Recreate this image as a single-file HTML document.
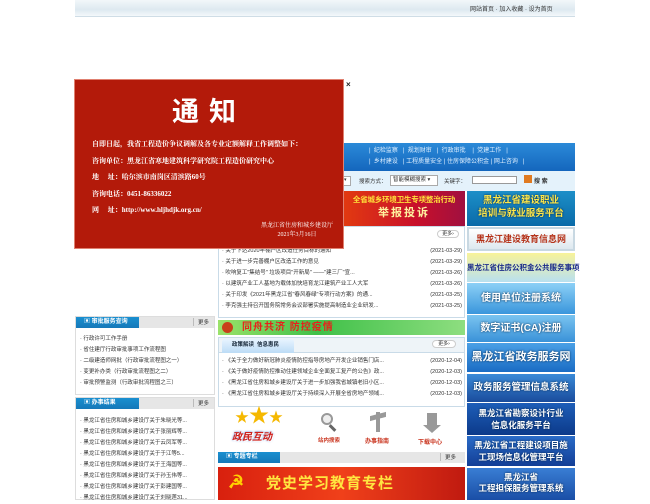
<!DOCTYPE html>
<html><head><meta charset="utf-8">
<style>
*{margin:0;padding:0;box-sizing:border-box}
body{width:650px;height:500px;overflow:hidden;background:#fff;font-family:"Liberation Sans","Noto Sans CJK SC",sans-serif;font-size:6px;color:#333;position:relative}
.a{position:absolute}
.hd{background:linear-gradient(#1a8fd0,#1578b8);color:#fff;font-weight:bold;padding-left:8px;line-height:12px;font-size:6px}
.li{position:absolute;left:0;right:0;font-size:5.5px;line-height:11px;white-space:nowrap;overflow:hidden}
.rb{position:absolute;left:467px;width:108px;color:#fff;font-weight:bold;text-align:center;text-shadow:0 0 2px #024;white-space:nowrap}
</style></head><body>
<div class="a" style="left:75px;top:0;width:500px;height:17px;background:linear-gradient(#f2f7fa,#dde9f0 60%,#f4f8fb);border-bottom:1px solid #cfdde6"></div>
<div class="a" style="left:470px;top:4px;font-size:6px;color:#333">网站首页 · 加入收藏 · 设为首页</div>

<div class="a" style="left:343px;top:143px;width:232px;height:28px;background:linear-gradient(#2b8ad8,#1466bd)"></div>
<div class="a" style="left:343px;top:146px;width:232px;color:#dfefff;font-size:6px;line-height:11px;white-space:nowrap">
<div style="position:absolute;left:26px;top:0">| &nbsp;纪检监察 &nbsp; | &nbsp;规划财审 &nbsp;&nbsp;| &nbsp;行政审批 &nbsp;&nbsp; | &nbsp;党建工作 &nbsp; |</div>
<div style="position:absolute;left:26px;top:11px">| &nbsp;乡村建设 &nbsp; | 工程质量安全 | 住房保障公积金 | 网上咨询 &nbsp; |</div></div>
<div class="a" style="left:343px;top:171px;width:232px;height:20px;background:#e4f2fb"></div>
<div class="a" style="left:343px;top:176px;width:8px;height:10px;border:1px solid #aaa;background:#fff;font-size:5px">▾</div>
<div class="a" style="left:359px;top:177px;font-size:5.5px">搜索方式：</div>
<div class="a" style="left:390px;top:175px;width:48px;height:11px;border:1px solid #aaa;background:#fff;font-size:5.5px;padding-left:2px;line-height:9px">智能模糊搜索 ▾</div>
<div class="a" style="left:444px;top:177px;font-size:5.5px">关键字：</div>
<div class="a" style="left:472px;top:176px;width:45px;height:8px;border:1px solid #999;background:#fff"></div>
<div class="a" style="left:524px;top:175px;width:8px;height:8px;background:#e07a20"></div>
<div class="a" style="left:534px;top:176px;font-size:6px;font-weight:bold">搜 索</div>

<div class="a" style="left:343px;top:191px;width:122px;height:35px;background:linear-gradient(90deg,#e23a10,#c8102a 60%,#a01040);color:#ffe23a;font-weight:bold;text-align:center;white-space:nowrap;overflow:hidden">
<div style="font-size:7.5px;margin-top:3px;letter-spacing:-0.2px">全省城乡环境卫生专项整治行动</div><div style="font-size:11px;line-height:16px;color:#fff4a0;letter-spacing:2px">举报投诉</div></div>
<div class="rb" style="top:191px;height:35px;background:linear-gradient(#1d8fc8,#0a6aa8);color:#ffe84a;font-size:9.5px;line-height:13px;padding-top:3px">黑龙江省建设职业<br>培训与就业服务平台</div>
<div class="rb" style="top:227px;height:24px;background:linear-gradient(#fff,#dde8ef);border:2px solid #c8d8e2;color:#b5331a;font-size:9px;line-height:20px;text-shadow:none">黑龙江建设教育信息网</div>
<div class="rb" style="top:253px;height:29px;background:linear-gradient(#f8f39a,#b8e0f0);color:#1a2a8a;font-size:7.5px;line-height:29px;text-shadow:none">黑龙江省住房公积金公共服务事项</div>
<div class="rb" style="top:283px;height:31px;background:linear-gradient(#8cd0f6,#3a96dc);font-size:10px;line-height:31px">使用单位注册系统</div>
<div class="rb" style="top:315px;height:27px;background:linear-gradient(#7ac4f0,#3a92d8);font-size:10px;line-height:27px">数字证书(CA)注册</div>
<div class="rb" style="top:343px;height:29px;background:linear-gradient(#4aa0e6,#1a6cc4);font-size:11px;line-height:29px">黑龙江省政务服务网</div>
<div class="rb" style="top:374px;height:28px;background:linear-gradient(#3a8ad8,#1a4c9c);font-size:9.5px;line-height:28px">政务服务管理信息系统</div>
<div class="rb" style="top:403px;height:32px;background:linear-gradient(#1e5eb8,#0c3a8a);font-size:8.5px;line-height:12px;padding-top:4px">黑龙江省勘察设计行业<br>信息化服务平台</div>
<div class="rb" style="top:436px;height:30px;background:linear-gradient(#2a6cc8,#133e96);font-size:8.5px;line-height:12px;padding-top:3px">黑龙江省工程建设项目施<br>工现场信息化管理平台</div>
<div class="rb" style="top:468px;height:32px;background:linear-gradient(#3a7ed4,#1a4ea6);font-size:8.5px;line-height:11px;padding-top:4px">黑龙江省<br>工程担保服务管理系统</div>

<div class="a" style="left:218px;top:226px;width:247px;height:92px;border:1px solid #c9dbe8;background:#fff"></div>
<div class="a" style="left:437px;top:230px;width:22px;height:8px;border:1px solid #ccc;border-radius:5px;font-size:5px;text-align:center;line-height:7px">更多›</div>
<div class="a" style="left:222px;top:246px;width:240px">
<div class="li" style="top:0">· 关于下达2020年棚户区改造任务目标的通知<span style="position:absolute;right:0">(2021-03-29)</span></div>
<div class="li" style="top:11px">· 关于进一步完善棚户区改造工作的意见<span style="position:absolute;right:0">(2021-03-29)</span></div>
<div class="li" style="top:22px">· 吹响复工"集结号" 垃圾项目"开新局" ——"建三厂"宣...<span style="position:absolute;right:0">(2021-03-26)</span></div>
<div class="li" style="top:33px">· 以建筑产业工人基地为载体加快培育龙江建筑产业工人大军<span style="position:absolute;right:0">(2021-03-26)</span></div>
<div class="li" style="top:44px">· 关于印发《2021年黑龙江省"春风春绿"专项行动方案》的通...<span style="position:absolute;right:0">(2021-03-25)</span></div>
<div class="li" style="top:55px">· 李克强主持召开国务院常务会议部署实施提高制造业企业研发...<span style="position:absolute;right:0">(2021-03-25)</span></div>
</div>
<div class="a" style="left:218px;top:320px;width:247px;height:15px;background:linear-gradient(90deg,#9be26a,#3fc048 40%,#8ede80);color:#e8201a;font-size:10px;font-weight:bold;padding-left:24px;line-height:15px;letter-spacing:1px">同舟共济 防控疫情</div>
<div class="a" style="left:222px;top:322px;width:11px;height:11px;border-radius:50%;background:#c8401a"></div>
<div class="a" style="left:218px;top:337px;width:247px;height:70px;border:1px solid #c9dbe8"></div>
<div class="a" style="left:219px;top:338px;width:245px;height:15px;background:#eef4f8;border-bottom:1px solid #c9dbe8"></div>
<div class="a" style="left:222px;top:339px;width:72px;height:14px;background:linear-gradient(#e8f4ff,#bcdcf6);border-radius:3px 3px 0 0;font-size:5.5px;font-weight:bold;line-height:13px;padding-left:10px;color:#123">政策解读 &nbsp;信息惠民</div>
<div class="a" style="left:432px;top:340px;width:24px;height:8px;border:1px solid #ccc;border-radius:5px;font-size:5px;text-align:center;line-height:7px;background:#fff">更多›</div>
<div class="a" style="left:222px;top:356px;width:240px">
<div class="li" style="top:0">· 《关于全力做好新冠肺炎疫情防控指导房地产开发企业销售门店...<span style="position:absolute;right:0">(2020-12-04)</span></div>
<div class="li" style="top:11px">· 《关于做好疫情防控推动住建领域企业全面复工复产的公告》政...<span style="position:absolute;right:0">(2020-12-03)</span></div>
<div class="li" style="top:22px">· 《黑龙江省住房和城乡建设厅关于进一步加强我省城镇老旧小区...<span style="position:absolute;right:0">(2020-12-03)</span></div>
<div class="li" style="top:33px">· 《黑龙江省住房和城乡建设厅关于持续深入开展全省房地产领域...<span style="position:absolute;right:0">(2020-12-03)</span></div>
</div>
<div class="a" style="left:235px;top:409px;color:#f5b800;font-size:14px;line-height:14px">★<span style="font-size:20px">★</span>★</div>
<div class="a" style="left:232px;top:428px;font-size:10px;font-weight:bold;color:#d0201a;font-style:italic;text-shadow:1px 1px 0 #fff,0 0 2px #3366cc">政民互动</div>
<div class="a" style="left:321px;top:413px;width:12px;height:12px;border:2px solid #999;border-radius:50%;background:#eee"></div>
<div class="a" style="left:331px;top:424px;width:3px;height:8px;background:#666;transform:rotate(-45deg)"></div>
<div class="a" style="left:318px;top:436px;font-size:5.5px;color:#c8301a;font-weight:bold">站内搜索</div>
<div class="a" style="left:376px;top:412px;width:4px;height:20px;background:#999"></div>
<div class="a" style="left:370px;top:414px;width:16px;height:5px;background:#999;transform:skewY(-15deg)"></div>
<div class="a" style="left:365px;top:436px;font-size:6px;color:#c8301a;font-weight:bold">办事指南</div>
<div class="a" style="left:427px;top:413px;width:10px;height:12px;background:#999"></div>
<div class="a" style="left:423px;top:425px;width:0;height:0;border-left:9px solid transparent;border-right:9px solid transparent;border-top:8px solid #999"></div>
<div class="a" style="left:418px;top:437px;font-size:6px;color:#c8301a;font-weight:bold">下载中心</div>
<div class="a" style="left:218px;top:452px;width:247px;height:11px;background:#e6e6e6"></div>
<div class="a hd" style="left:218px;top:452px;width:62px;height:11px;line-height:11px">▣ 专题专栏</div>
<div class="a" style="left:440px;top:453px;font-size:5.5px;border-left:1px solid #bbb;padding-left:4px">更多</div>
<div class="a" style="left:218px;top:467px;width:247px;height:33px;background:linear-gradient(90deg,#d8200e,#f0401a 50%,#c01a10);color:#ffe640;font-size:15px;font-weight:bold;padding-left:48px;line-height:33px;letter-spacing:1px">党史学习教育专栏</div>
<div class="a" style="left:228px;top:472px;color:#ffd000;font-size:18px;font-weight:bold">☭</div>

<div class="a" style="left:75px;top:316px;width:140px;height:79px;border:1px solid #ddd"></div>
<div class="a" style="left:76px;top:317px;width:138px;height:11px;background:#e6e6e6"></div>
<div class="a hd" style="left:76px;top:317px;width:63px;height:11px;line-height:11px">▣ 审批服务查询</div>
<div class="a" style="left:193px;top:318px;font-size:5.5px;border-left:1px solid #bbb;padding-left:4px">更多</div>
<div class="a" style="left:80px;top:334px;width:134px">
<div class="li" style="top:0">· 行政许可工作手册</div>
<div class="li" style="top:11px">· 省住建厅行政审批事项工作流程图</div>
<div class="li" style="top:22px">· 二级建造师网批（行政审批流程图之一）</div>
<div class="li" style="top:33px">· 变更补办类（行政审批流程图之二）</div>
<div class="li" style="top:44px">· 审批预警监测（行政审批流程图之三）</div>
</div>
<div class="a" style="left:75px;top:397px;width:140px;height:103px;border:1px solid #ddd"></div>
<div class="a" style="left:76px;top:398px;width:138px;height:11px;background:#e6e6e6"></div>
<div class="a hd" style="left:76px;top:398px;width:63px;height:11px;line-height:11px">▣ 办事结果</div>
<div class="a" style="left:193px;top:399px;font-size:5.5px;border-left:1px solid #bbb;padding-left:4px">更多</div>
<div class="a" style="left:80px;top:416px;width:134px">
<div class="li" style="top:0">· 黑龙江省住房和城乡建设厅关于朱晓光等...</div>
<div class="li" style="top:11px">· 黑龙江省住房和城乡建设厅关于张丽辉等...</div>
<div class="li" style="top:22px">· 黑龙江省住房和城乡建设厅关于云凤军等...</div>
<div class="li" style="top:33px">· 黑龙江省住房和城乡建设厅关于于江等5...</div>
<div class="li" style="top:44px">· 黑龙江省住房和城乡建设厅关于王海国等...</div>
<div class="li" style="top:55px">· 黑龙江省住房和城乡建设厅关于孙玉伟等...</div>
<div class="li" style="top:66px">· 黑龙江省住房和城乡建设厅关于彭建国等...</div>
<div class="li" style="top:77px">· 黑龙江省住房和城乡建设厅关于刘晓莲31...</div>
</div>

<div class="a" style="left:74px;top:79px;width:270px;height:170px;background:#b31a0a;border:1px solid #e08070;color:#fff;font-family:'Liberation Serif','Noto Serif CJK SC',serif;font-weight:bold">
<div style="position:absolute;left:0;right:0;top:10px;text-align:center;font-size:27px;font-family:'Noto Sans CJK SC',sans-serif;letter-spacing:10px">通知</div>
<div style="position:absolute;left:17px;top:56px;font-size:7px;line-height:16.5px;white-space:nowrap">
自即日起，我省工程造价争议调解及各专业定额解释工作调整如下：<br>
咨询单位：黑龙江省寒地建筑科学研究院工程造价研究中心<br>
地 &nbsp;&nbsp;&nbsp;&nbsp;址：哈尔滨市南岗区清滨路60号<br>
咨询电话：0451-86336022<br>
网 &nbsp;&nbsp;&nbsp;&nbsp;址：http://www.hljhdjk.org.cn/</div>
<div style="position:absolute;right:10px;top:142px;font-size:6px;line-height:9px;text-align:center;font-weight:normal">黑龙江省住房和城乡建设厅<br>2021年3月16日</div>
</div>
<div class="a" style="left:346px;top:80px;font-size:8px;font-weight:bold;color:#222">×</div>
</body></html>
